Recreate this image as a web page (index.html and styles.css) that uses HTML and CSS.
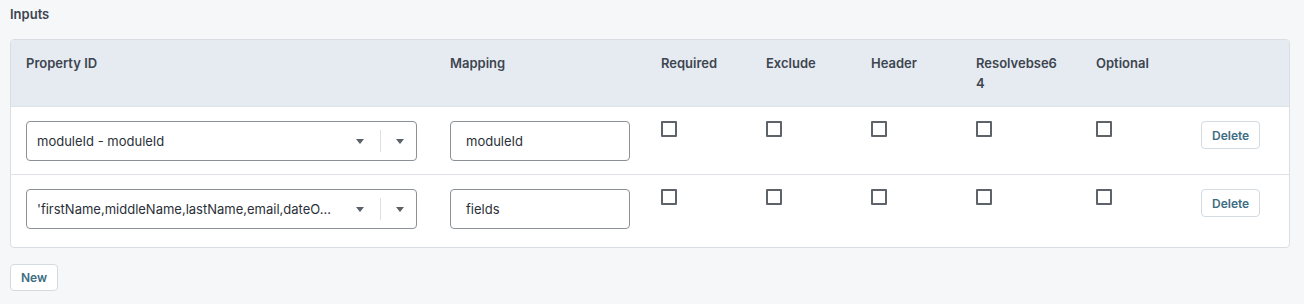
FILE: index.html
```html
<!DOCTYPE html>
<html lang="en">
<head>
<meta charset="utf-8">
<title>Inputs</title>
<link rel="stylesheet" href="styles.css">
</head>
<body>
<div class="page">
  <h2 class="title">Inputs</h2>
  <div class="table">
    <div class="row head">
      <div class="cell">Property ID</div>
      <div class="cell">Mapping</div>
      <div class="cell">Required</div>
      <div class="cell">Exclude</div>
      <div class="cell">Header</div>
      <div class="cell narrow">Resolvebse64</div>
      <div class="cell">Optional</div>
      <div class="cell"></div>
    </div>
    <div class="row">
      <div class="cell">
        <div class="select">
          <span class="select-value">moduleId - moduleId</span>
          <span class="caret"></span>
          <span class="sep"></span>
          <span class="caret"></span>
        </div>
      </div>
      <div class="cell"><div class="input">moduleId</div></div>
      <div class="cell"><span class="check"></span></div>
      <div class="cell"><span class="check"></span></div>
      <div class="cell"><span class="check"></span></div>
      <div class="cell"><span class="check"></span></div>
      <div class="cell"><span class="check"></span></div>
      <div class="cell"><button class="btn">Delete</button></div>
    </div>
    <div class="row">
      <div class="cell">
        <div class="select">
          <span class="select-value">'firstName,middleName,lastName,email,dateO...</span>
          <span class="caret"></span>
          <span class="sep"></span>
          <span class="caret"></span>
        </div>
      </div>
      <div class="cell"><div class="input">fields</div></div>
      <div class="cell"><span class="check"></span></div>
      <div class="cell"><span class="check"></span></div>
      <div class="cell"><span class="check"></span></div>
      <div class="cell"><span class="check"></span></div>
      <div class="cell"><span class="check"></span></div>
      <div class="cell"><button class="btn">Delete</button></div>
    </div>
  </div>
  <button class="btn new">New</button>
</div>
</body>
</html>
```

FILE: styles.css
```css
* { box-sizing: border-box; }
html, body { margin: 0; padding: 0; }
body {
  background: #f6f7f9;
  font-family: Inter, "Noto Sans", sans-serif;
  font-size: 13px;
  color: #3d4550;
}
.page { padding: 4px 10px 0; }
.title {
  margin: 0 0 15px;
  font-size: 13px;
  line-height: 20px;
  font-weight: 600;
  color: #3d4550;
}
.table {
  width: 1280px;
  background: #fff;
  border: 1px solid #d9dee4;
  border-radius: 4px;
  padding-bottom: 5px;
}
.row {
  display: grid;
  grid-template-columns: 424px 211px 105px 105px 105px 120px 105px 103px;
  border-top: 1px solid #dfe3e8;
}
.row.head {
  border-top: 0;
  background: #e6ebf1;
  border-radius: 3px 3px 0 0;
  font-weight: 600;
  line-height: 20px;
  color: #3d4550;
}
.row.head .cell { padding: 13px 15px; }
.row.head .cell.narrow { word-break: break-all; padding-right: 22px; }
.row .cell { padding: 14px 15px 13px; }
.select {
  display: flex;
  align-items: center;
  width: 391px;
  height: 40px;
  border: 1px solid #8c9197;
  border-radius: 4px;
  padding: 0 12px 0 10px;
  background: #fff;
  color: #2b3038;
}
.select-value {
  flex: 1;
  white-space: nowrap;
  overflow: hidden;
}
.caret {
  width: 0;
  height: 0;
  border-left: 4px solid transparent;
  border-right: 4px solid transparent;
  border-top: 5px solid #5a6068;
  margin: 1px 0 0;
}
.sep {
  width: 1px;
  height: 22px;
  background: #dcdfe3;
  margin: 0 15px 0 16px;
}
.input {
  width: 180px;
  height: 40px;
  border: 1px solid #8c9197;
  border-radius: 4px;
  padding: 0 15px;
  display: flex;
  align-items: center;
  color: #2b3038;
}
.check {
  display: block;
  width: 16px;
  height: 16px;
  border: 2px solid #5e6369;
  border-radius: 1px;
  background: #fff;
}
.btn {
  font-family: Inter, "Noto Sans", sans-serif;
  font-size: 12px;
  font-weight: 600;
  color: #3c6d83;
  background: #fff;
  border: 1px solid #d3dbe1;
  border-radius: 4px;
  height: 28px;
  padding: 0 10px;
  cursor: pointer;
}
.new {
  margin-top: 16px;
  height: 27px;
  width: 48px;
  padding: 0;
}
```
